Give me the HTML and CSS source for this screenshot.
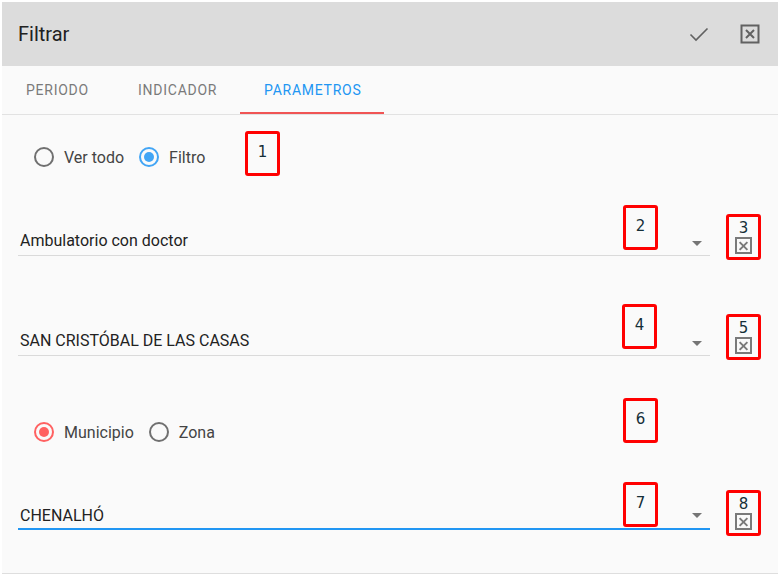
FILE: index.html
```html
<!DOCTYPE html>
<html lang="es">
<head>
<meta charset="utf-8">
<title>Filtrar</title>
<link rel="stylesheet" href="styles.css">
</head>
<body>
<div class="dialog">
  <header class="toolbar">
    <h1 class="title">Filtrar</h1>
    <div class="actions">
      <button class="icon-btn" aria-label="Aceptar">
        <svg width="20" height="20" viewBox="0 0 20 20"><path d="M1.5 10.5 L7 16 L18.5 4.5" fill="none" stroke="#616161" stroke-width="1.6"/></svg>
      </button>
      <button class="icon-btn" aria-label="Cerrar">
        <svg width="20" height="20" viewBox="0 0 20 20"><rect x="1.5" y="1.5" width="17" height="17" fill="none" stroke="#616161" stroke-width="2"/><path d="M6 6 L14 14 M14 6 L6 14" stroke="#616161" stroke-width="2"/></svg>
      </button>
    </div>
  </header>
  <nav class="tabs">
    <div class="tab">Periodo</div>
    <div class="tab">Indicador</div>
    <div class="tab active">Parametros</div>
  </nav>
  <main class="content">
    <div class="radio-row first">
      <label class="radio"><span class="dot"></span>Ver todo</label>
      <label class="radio checked blue"><span class="dot"></span>Filtro</label>
    </div>

    <div class="field-row r1">
      <div class="select"><span class="value">Ambulatorio con doctor</span><span class="caret"></span></div>
      <button class="clear"><span class="num">3</span><span class="xbox"></span></button>
    </div>

    <div class="field-row r2">
      <div class="select"><span class="value">SAN CRISTÓBAL DE LAS CASAS</span><span class="caret"></span></div>
      <button class="clear"><span class="num">5</span><span class="xbox"></span></button>
    </div>

    <div class="radio-row second">
      <label class="radio checked red"><span class="dot"></span>Municipio</label>
      <label class="radio"><span class="dot"></span>Zona</label>
    </div>

    <div class="field-row r3">
      <div class="select focused"><span class="value">CHENALHÓ</span><span class="caret"></span></div>
      <button class="clear"><span class="num">8</span><span class="xbox"></span></button>
    </div>

    <div class="mark m1">1</div>
    <div class="mark m2">2</div>
    <div class="mark m4">4</div>
    <div class="mark m6">6</div>
    <div class="mark m7">7</div>
  </main>
</div>
</body>
</html>
```
FILE: styles.css
```css
* { box-sizing: border-box; }
html, body { margin: 0; padding: 0; background: #ffffff; }
body { font-family: Roboto, "Noto Sans", sans-serif; }

.dialog {
  margin: 2px 0 0 2px;
  width: 776px;
  height: 572px;
  background: #fafafa;
  border-bottom: 1px solid #dedede;
}

.toolbar {
  height: 64px;
  background: #dcdcdc;
  display: flex;
  align-items: center;
  justify-content: space-between;
  padding: 0 16px;
}
.title {
  margin: 0;
  font-size: 20px;
  font-weight: 400;
  color: #212121;
}
.actions { display: flex; gap: 31px; align-items: center; margin-right: 2px; }
.icon-btn {
  background: none; border: 0; padding: 0; width: 20px; height: 20px;
  display: flex; align-items: center; justify-content: center;
}

.tabs {
  height: 49px;
  display: flex;
  border-bottom: 1px solid #e2e2e2;
}
.tab {
  padding: 0 24px;
  height: 48px;
  display: flex;
  align-items: center;
  font-size: 14px;
  letter-spacing: 0.75px;
  text-transform: uppercase;
  color: #7a7a7a;
}
.tab:nth-child(1) { width: 112px; }
.tab:nth-child(2) { width: 126px; }
.tab:nth-child(3) { width: 144px; }
.tab.active {
  color: #2196f3;
  border-bottom: 2px solid #f05454;
  padding-top: 2px;
}

.content {
  position: relative;
  padding: 32px 0 0 16px;
}

.radio-row {
  display: flex;
  align-items: center;
  height: 20px;
  gap: 15px;
  padding-left: 16px;
}
.radio-row.second { margin-top: 66px; }
.radio {
  display: flex;
  align-items: center;
  font-size: 16px;
  color: #444;
}
.dot {
  width: 20px; height: 20px;
  border: 2px solid #707070;
  border-radius: 50%;
  margin-right: 10px;
  position: relative;
}
.radio.checked.blue .dot { border-color: #42a5f5; }
.radio.checked.red .dot { border-color: #ff6161; }
.radio.checked .dot::after {
  content: "";
  position: absolute;
  left: 3px; top: 3px;
  width: 10px; height: 10px;
  border-radius: 50%;
}
.radio.checked.blue .dot::after { background: #42a5f5; }
.radio.checked.red .dot::after { background: #ff6161; }

.field-row {
  display: flex;
  align-items: flex-end;
  gap: 16px;
}
.field-row.r1 { margin-top: 47px; }
.field-row.r2 { margin-top: 58px; }
.field-row.r3 { margin-top: 48px; }

.select {
  width: 692px;
  height: 32px;
  display: flex;
  align-items: center;
  justify-content: space-between;
  padding: 3px 8px 0 2px;
  border-bottom: 1px solid #dadada;
}
.select.focused { border-bottom: 2px solid #2196f3; height: 33px; padding-top: 6px; }
.value { font-size: 16px; color: #222; line-height: 20px; }
.caret {
  width: 0; height: 0;
  border-left: 5px solid transparent;
  border-right: 5px solid transparent;
  border-top: 5px solid #757575;
  margin-top: 5px;
}
.select.focused .caret { margin-top: 0; }

.clear {
  width: 35px; height: 46px;
  border: 3px solid #ff0000;
  border-radius: 3px;
  background: none;
  padding: 3px 0 0;
  margin-bottom: -4px;
  display: flex;
  flex-direction: column;
  align-items: center;
}
.r3 .clear { margin-bottom: -6px; }
.num {
  font-family: "DejaVu Sans", sans-serif;
  font-size: 15px;
  line-height: 17px;
  color: #152f38;
}
.xbox {
  width: 17px; height: 17px;
  border: 2px solid #7a7a7a;
  position: relative;
}
.xbox::before, .xbox::after {
  content: "";
  position: absolute;
  left: 1px; top: 5.5px;
  width: 11px; height: 2px;
  background: #7a7a7a;
  transform: rotate(45deg);
}
.xbox::after { transform: rotate(-45deg); }

.mark {
  position: absolute;
  width: 35px; height: 45px;
  border: 3px solid #ff0000;
  border-radius: 3px;
  text-align: center;
  padding-top: 10px;
  font-family: "DejaVu Sans", sans-serif;
  font-size: 15px;
  line-height: 17px;
  color: #152f38;
}
.m1 { left: 243px; top: 16px; }
.m2 { left: 621px; top: 90px; }
.m4 { left: 620px; top: 189px; }
.m6 { left: 621px; top: 283px; }
.m7 { left: 621px; top: 367px; }
```
